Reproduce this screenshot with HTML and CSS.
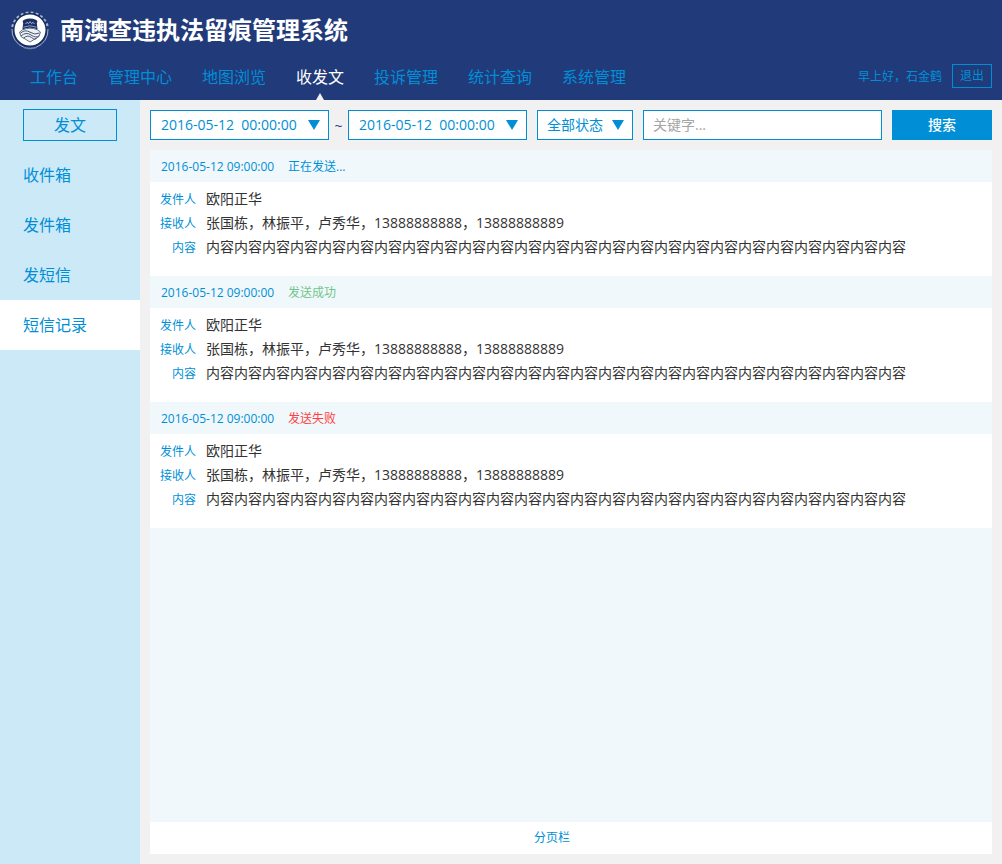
FILE: index.html
```html
<!DOCTYPE html>
<html lang="zh-CN">
<head>
<meta charset="utf-8">
<meta name="viewport" content="width=device-width, initial-scale=1">
<title>南澳查违执法留痕管理系统</title>
<link rel="stylesheet" href="styles.css">
</head>
<body>
<header class="header">
  <div class="brand">
    <svg class="logo" viewBox="0 0 40 40" aria-hidden="true">
      <path d="M2.4 17A18 18 0 0 1 37.6 17" fill="none" stroke="#a9b4cd" stroke-width="2.6" stroke-dasharray="2.8 2.2"/>
      <path d="M2 19A18.2 18.2 0 0 0 14 37.3M38 19A18.2 18.2 0 0 1 26 37.3" fill="none" stroke="#a9b4cd" stroke-width="1"/>
      <path d="M14.5 37.6A18.5 18.5 0 0 0 25.5 37.6" fill="none" stroke="#a9b4cd" stroke-width="1.6" stroke-dasharray="1.2 .8"/>
      <circle cx="20" cy="20" r="16.2" fill="#fff" stroke="#142a5e" stroke-width="1.4"/>
      <path d="M12.6 11.5Q13.5 9 20 8.6Q26.5 9 27.4 11.5L26.8 13.2L27.6 19.4Q20 16 12.4 19.4L13.2 13.2Z" fill="#1b3069"/>
      <path d="M15.5 14L17 12.3L18.5 13.6L20 11.6L21.5 13.6L23 12.3L24.5 14" fill="none" stroke="#cfd7e6" stroke-width=".8"/>
      <path d="M13.4 17.2Q20 14.4 26.6 17.2" fill="none" stroke="#dce3ee" stroke-width=".6"/>
      <path d="M12.6 19.8Q20 16.6 27.4 19.8L30.4 22L29 26.5L20 32L11 26.5L9.6 22Z" fill="#eef1f4" stroke="#52637f" stroke-width=".9"/>
      <path d="M10.5 23.2Q15 19 20 22.2T29.4 23M11 26Q16 21.5 21 25T29 25.8M13.5 28.2Q17.5 24.5 21.5 27.5T26.5 28.2" fill="none" stroke="#465774" stroke-width="1"/>
    </svg>
    <h1 class="title">南澳查违执法留痕管理系统</h1>
  </div>
  <div class="topbar">
    <nav class="nav" aria-label="主导航">
      <a class="nav-link" href="#">工作台</a>
      <a class="nav-link" href="#">管理中心</a>
      <a class="nav-link" href="#">地图浏览</a>
      <a class="nav-link nav-link-active" href="#" aria-current="page">收发文</a>
      <a class="nav-link" href="#">投诉管理</a>
      <a class="nav-link" href="#">统计查询</a>
      <a class="nav-link" href="#">系统管理</a>
    </nav>
    <div class="user">
      <span>早上好，石金鹤</span>
      <button class="logout" type="button">退出</button>
    </div>
  </div>
</header>
<div class="layout">
  <aside class="sidebar">
    <button class="compose" type="button">发文</button>
    <nav class="menu" aria-label="收发文">
      <a class="menu-link" href="#">收件箱</a>
      <a class="menu-link" href="#">发件箱</a>
      <a class="menu-link" href="#">发短信</a>
      <a class="menu-link menu-link-active" href="#" aria-current="page">短信记录</a>
    </nav>
  </aside>
  <main class="main">
    <form class="filters">
      <div class="range">
        <div class="picker picker-date">
          <input class="field" type="text" aria-label="开始时间" value="2016-05-12  00:00:00">
          <svg class="arrow" viewBox="0 0 12 10" aria-hidden="true"><path d="M0 0H12L6 10Z"/></svg>
        </div>
        <span class="tilde">~</span>
        <div class="picker picker-date">
          <input class="field" type="text" aria-label="结束时间" value="2016-05-12  00:00:00">
          <svg class="arrow" viewBox="0 0 12 10" aria-hidden="true"><path d="M0 0H12L6 10Z"/></svg>
        </div>
      </div>
      <div class="picker picker-status">
        <select class="field field-select" aria-label="状态"><option>全部状态</option></select>
        <svg class="arrow" viewBox="0 0 12 10" aria-hidden="true"><path d="M0 0H12L6 10Z"/></svg>
      </div>
      <input class="field keyword" type="text" aria-label="关键字" placeholder="关键字...">
      <button class="search" type="submit">搜索</button>
    </form>
    <section class="panel">
      <div class="records">
        <article class="record">
          <header class="record-head"><time class="record-time">2016-05-12 09:00:00</time><span>正在发送...</span></header>
          <dl class="record-body">
            <dt>发件人</dt><dd>欧阳正华</dd>
            <dt>接收人</dt><dd>张国栋，林振平，卢秀华，13888888888，13888888889</dd>
            <dt>内容</dt><dd>内容内容内容内容内容内容内容内容内容内容内容内容内容内容内容内容内容内容内容内容内容内容内容内容内容</dd>
          </dl>
        </article>
        <article class="record">
          <header class="record-head"><time class="record-time">2016-05-12 09:00:00</time><span class="success">发送成功</span></header>
          <dl class="record-body">
            <dt>发件人</dt><dd>欧阳正华</dd>
            <dt>接收人</dt><dd>张国栋，林振平，卢秀华，13888888888，13888888889</dd>
            <dt>内容</dt><dd>内容内容内容内容内容内容内容内容内容内容内容内容内容内容内容内容内容内容内容内容内容内容内容内容内容</dd>
          </dl>
        </article>
        <article class="record">
          <header class="record-head"><time class="record-time">2016-05-12 09:00:00</time><span class="failure">发送失败</span></header>
          <dl class="record-body">
            <dt>发件人</dt><dd>欧阳正华</dd>
            <dt>接收人</dt><dd>张国栋，林振平，卢秀华，13888888888，13888888889</dd>
            <dt>内容</dt><dd>内容内容内容内容内容内容内容内容内容内容内容内容内容内容内容内容内容内容内容内容内容内容内容内容内容</dd>
          </dl>
        </article>
      </div>
      <footer class="pager">分页栏</footer>
    </section>
  </main>
</div>
</body>
</html>
```
FILE: styles.css
```css
:root {
  --navy: #213a79;
  --blue: #008fd7;
  --pale: #f0f8fc;
}
* { box-sizing: border-box; }
body {
  margin: 0;
  min-height: 100vh;
  display: flex;
  flex-direction: column;
  background: #f1f1f1;
  color: #333;
  font-family: "Open Sans", "Noto Sans CJK SC", sans-serif;
  font-size: 14px;
}
button, input, select { font: inherit; margin: 0; border-radius: 0; }
button { cursor: pointer; padding: 0; }
a { color: inherit; text-decoration: none; }

.header { background: var(--navy); color: var(--blue); }
.brand { display: flex; align-items: center; gap: 10px; height: 60px; padding: 0 10px; }
.logo { width: 40px; height: 40px; }
.title { margin: 0; color: #fff; font-size: 24px; line-height: 32px; font-weight: 700; }
.topbar { display: flex; justify-content: space-between; height: 40px; padding: 0 10px 0 30px; }
.nav { display: flex; gap: 30px; font-size: 16px; line-height: 34px; }
.nav-link { position: relative; }
.nav-link-active { color: #fff; }
.nav-link-active::after {
  content: "";
  position: absolute;
  left: 50%;
  bottom: 0;
  margin-left: -4px;
  border: 4px solid transparent;
  border-top: 0;
  border-bottom: 7px solid #f1f1f1;
}
.user { display: flex; align-items: flex-start; gap: 10px; padding-top: 4px; font-size: 12px; line-height: 26px; }
.logout { width: 40px; height: 24px; line-height: 22px; border: 1px solid var(--blue); background: none; color: var(--blue); }

.layout { flex: 1; display: flex; }
.sidebar { flex: none; width: 140px; background: #cce9f7; color: var(--blue); font-size: 16px; }
.compose { display: block; width: 94px; height: 32px; margin: 9px 23px; border: 1px solid var(--blue); background: none; color: var(--blue); line-height: 30px; }
.menu-link { display: block; padding: 0 23px; line-height: 50px; }
.menu-link-active { background: #fff; }

.main { flex: 1; min-width: 0; display: flex; flex-direction: column; gap: 10px; padding: 10px; }
.filters { display: flex; gap: 10px; }
.range { display: flex; align-items: center; }
.tilde { width: 19px; text-align: center; color: var(--navy); }
.picker { position: relative; }
.picker-date { width: 179px; }
.picker-status { width: 96px; }
.field { display: block; width: 100%; height: 30px; padding: 0 10px 2px; border: 1px solid var(--blue); background: #fff; color: var(--blue); outline: 0; }
.field-select { appearance: none; padding: 0 9px 2px; }
.arrow { position: absolute; right: 9px; top: 10px; width: 12px; height: 10px; fill: var(--blue); pointer-events: none; }
.keyword { flex: 1; width: 0; padding: 0 9px 2px; }
.keyword::placeholder { color: #a5a5a5; opacity: 1; }
.search { width: 100px; height: 30px; padding-bottom: 2px; border: 0; background: var(--blue); color: #fff; font-weight: 500; }

.panel { flex: 1; display: flex; flex-direction: column; background: var(--pale); }
.records { flex: 1; }
.record-head { display: flex; gap: 9px; height: 32px; padding: 0 11px; font-size: 12px; line-height: 34px; color: var(--blue); }
.record-time { min-width: 118px; }
.success { color: #70c68a; }
.failure { color: #ff4040; }
.record-body { display: grid; grid-template-columns: 36px 1fr; column-gap: 10px; align-items: baseline; grid-auto-rows: 24px; margin: 0; padding: 5px 10px 17px; background: #fff; line-height: 24px; }
.record-body dt { font-size: 12px; text-align: right; color: var(--blue); }
.record-body dd { margin: 0; }
.pager { background: #fff; color: var(--blue); font-size: 12px; line-height: 32px; padding-right: 38px; text-align: center; }
```
